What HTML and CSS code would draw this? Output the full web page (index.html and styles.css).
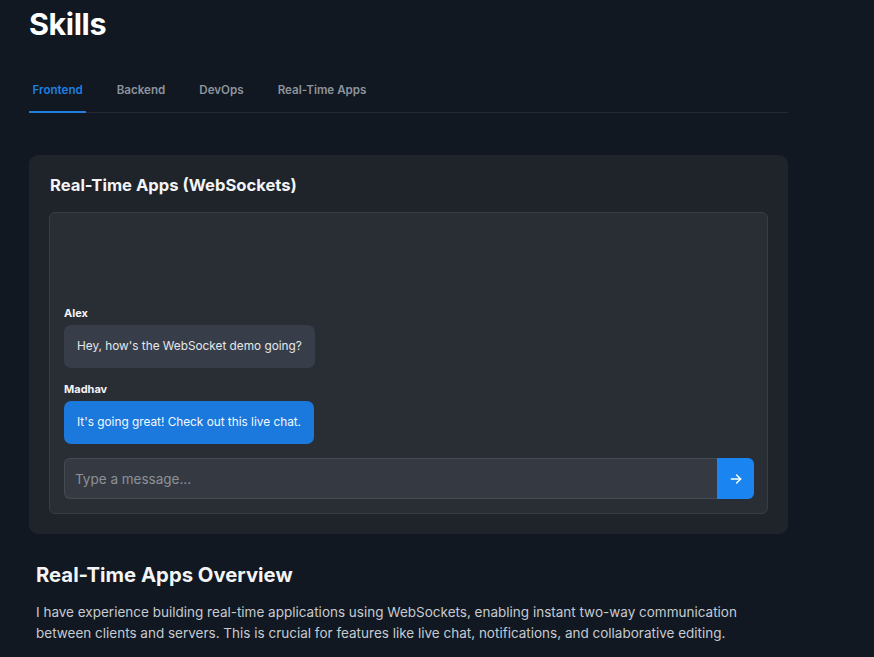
FILE: index.html
```html
<!DOCTYPE html>
<html lang="en">
<head>
<meta charset="utf-8">
<title>Skills</title>
<link rel="stylesheet" href="styles.css">
</head>
<body>
<main class="page">
  <h1 class="page-title">Skills</h1>
  <nav class="tabs">
    <span class="tab active">Frontend</span>
    <span class="tab">Backend</span>
    <span class="tab">DevOps</span>
    <span class="tab">Real-Time Apps</span>
  </nav>

  <section class="card">
    <h2 class="card-title">Real-Time Apps (WebSockets)</h2>
    <div class="chat">
      <div class="messages">
        <div class="msg">
          <div class="sender">Alex</div>
          <div class="bubble other">Hey, how's the WebSocket demo going?</div>
        </div>
        <div class="msg">
          <div class="sender">Madhav</div>
          <div class="bubble mine">It's going great! Check out this live chat.</div>
        </div>
      </div>
      <div class="composer">
        <input class="composer-input" type="text" placeholder="Type a message...">
        <button class="send" type="button" aria-label="Send">
          <svg width="14" height="14" viewBox="0 0 24 24" fill="none" stroke="#fff" stroke-width="2.4" stroke-linecap="round" stroke-linejoin="round"><path d="M4 12h16"/><path d="M13 5l7 7-7 7"/></svg>
        </button>
      </div>
    </div>
  </section>

  <section class="overview">
    <h2 class="overview-title">Real-Time Apps Overview</h2>
    <p class="overview-text">I have experience building real-time applications using WebSockets, enabling instant two-way communication between clients and servers. This is crucial for features like live chat, notifications, and collaborative editing.</p>
  </section>
</main>
</body>
</html>
```

FILE: styles.css
```css
* { box-sizing: border-box; }

html, body {
  margin: 0;
  padding: 0;
  background: #111821;
  font-family: Inter, "Liberation Sans", Arial, sans-serif;
  color: #f3f4f6;
  overflow: hidden;
}

.page {
  width: 759px;
  margin-left: 29px;
}

.page-title {
  margin: 5px 0 30px;
  font-size: 30.5px;
  font-weight: 700;
  line-height: normal;
  color: #ffffff;
  letter-spacing: -0.4px;
}

.tabs {
  display: flex;
  gap: 27px;
  border-bottom: 1px solid #232a34;
  margin-bottom: 42px;
}

.tab {
  padding: 10px 3.5px 13px;
  font-size: 11.6px;
  line-height: 16px;
  font-weight: 600;
  color: #8d949e;
  border-bottom: 2px solid transparent;
  margin-bottom: -1px;
}

.tab.active {
  color: #1f7fe0;
  border-bottom-color: #1f7fe0;
}

.card {
  background: #1f242b;
  border-radius: 9px;
  padding: 20px;
}

.card-title {
  margin: 0 0 17px 1px;
  font-size: 16.6px;
  font-weight: 700;
  line-height: normal;
  color: #f3f4f6;
}

.chat {
  background: #292e35;
  border: 1px solid #383d45;
  border-radius: 6px;
  padding: 13px 13px 14px 14px;
  display: flex;
  flex-direction: column;
  gap: 14px;
}

.messages {
  height: 218px;
  display: flex;
  flex-direction: column;
  justify-content: flex-end;
  gap: 14px;
}

.msg {
  display: flex;
  flex-direction: column;
  align-items: flex-start;
  gap: 5px;
}

.sender {
  font-size: 11px;
  line-height: 14px;
  font-weight: 700;
  color: #f3f4f6;
}

.bubble {
  padding: 13px;
  font-size: 11.8px;
  line-height: 17px;
  border-radius: 7px;
  color: #e5e7eb;
}

.bubble.other { background: #373e4a; }
.bubble.mine { background: #1b78dc; color: #f4f8ff; }

.composer {
  display: flex;
  height: 41px;
}

.composer-input {
  flex: 1;
  min-width: 0;
  background: #353a42;
  border: 1px solid #464b53;
  border-right: none;
  border-radius: 6px 0 0 6px;
  padding: 0 10px;
  font-family: inherit;
  font-size: 13.5px;
  color: #e5e7eb;
  outline: none;
}

.composer-input::placeholder { color: #8c9199; }

.send {
  width: 37px;
  border: none;
  background: #1a84f0;
  border-radius: 0 6px 6px 0;
  display: flex;
  align-items: center;
  justify-content: center;
  padding: 0;
}

.overview {
  padding: 28px 7px 0;
}

.overview-title {
  margin: 0 0 15px;
  font-size: 20.3px;
  font-weight: 700;
  line-height: normal;
  color: #f3f4f6;
}

.overview-text {
  margin: 0;
  font-size: 13.5px;
  line-height: 21px;
  color: #c6cad1;
}
```
